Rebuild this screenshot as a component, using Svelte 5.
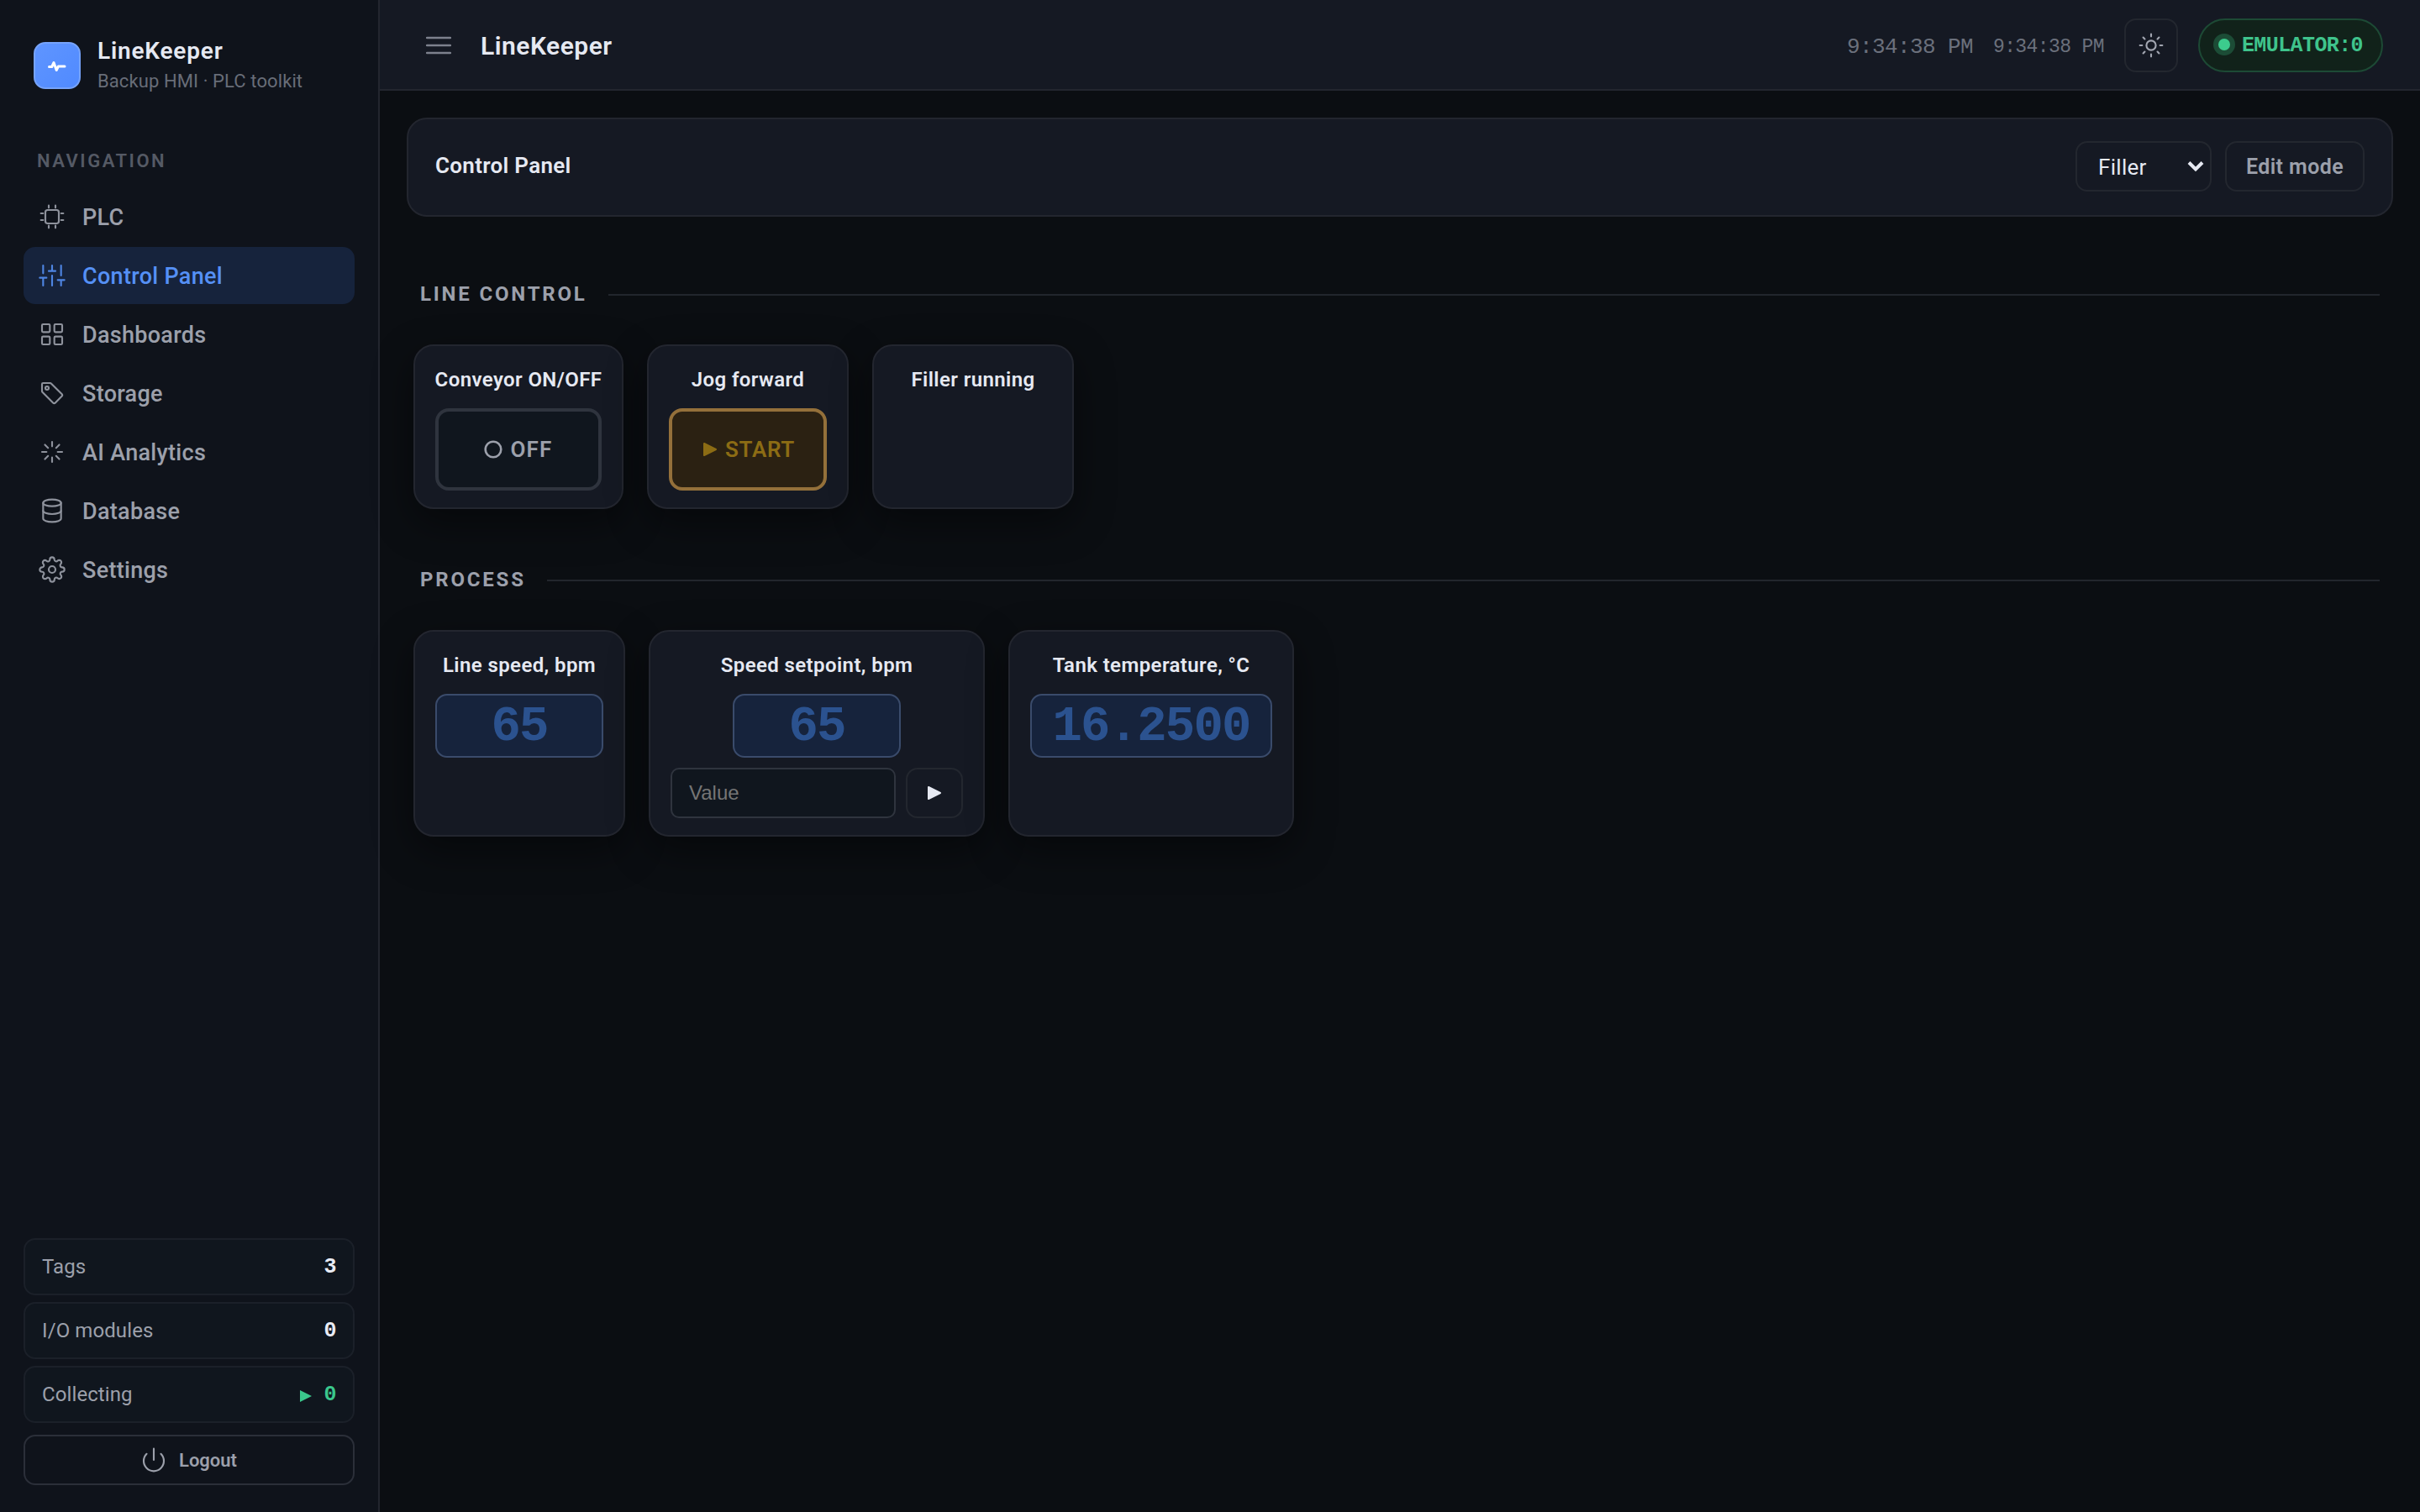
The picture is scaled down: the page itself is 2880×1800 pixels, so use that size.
<script lang="ts">
	const nav = [
		{
			label: "PLC",
			paths: [
				"M8 6h8a2 2 0 0 1 2 2v8a2 2 0 0 1-2 2H8a2 2 0 0 1-2-2V8a2 2 0 0 1 2-2z",
				"M9 2v2M15 2v2M9 20v2M15 20v2M20 9h2M20 15h2M2 9h2M2 15h2"
			]
		},
		{
			label: "Control Panel",
			paths: ["M4 21v-7M4 10V3M12 21v-9M12 8V3M20 21v-5M20 12V3M1 14h6M9 8h6M17 16h6"]
		},
		{
			label: "Dashboards",
			paths: [
				"M4 3h5a1 1 0 0 1 1 1v5a1 1 0 0 1-1 1H4a1 1 0 0 1-1-1V4a1 1 0 0 1 1-1z",
				"M15 3h5a1 1 0 0 1 1 1v5a1 1 0 0 1-1 1h-5a1 1 0 0 1-1-1V4a1 1 0 0 1 1-1z",
				"M4 14h5a1 1 0 0 1 1 1v5a1 1 0 0 1-1 1H4a1 1 0 0 1-1-1v-5a1 1 0 0 1 1-1z",
				"M15 14h5a1 1 0 0 1 1 1v5a1 1 0 0 1-1 1h-5a1 1 0 0 1-1-1v-5a1 1 0 0 1 1-1z"
			]
		},
		{
			label: "Storage",
			paths: [
				"M3 10.2V4a1 1 0 0 1 1-1h6.2a1.6 1.6 0 0 1 1.1.5l9.3 9.3a1.5 1.5 0 0 1 0 2.1l-5.7 5.7a1.5 1.5 0 0 1-2.1 0L3.5 11.3a1.6 1.6 0 0 1-.5-1.1z",
				"M9 7.5a1.5 1.5 0 1 1-3 0 1.5 1.5 0 0 1 3 0z"
			]
		},
		{
			label: "AI Analytics",
			paths: [
				"M12 3v4M12 17v4M3 12h4M17 12h4M5.6 5.6l2.8 2.8M15.6 15.6l2.8 2.8M5.6 18.4l2.8-2.8M15.6 8.4l2.8-2.8"
			]
		},
		{
			label: "Database",
			paths: [
				"M20 5c0 1.66-3.58 3-8 3S4 6.66 4 5s3.58-3 8-3 8 1.34 8 3z",
				"M4 5v14c0 1.66 3.58 3 8 3s8-1.34 8-3V5",
				"M4 12c0 1.66 3.58 3 8 3s8-1.34 8-3"
			]
		},
		{
			label: "Settings",
			paths: [
				"M15 12a3 3 0 1 1-6 0 3 3 0 0 1 6 0z",
				"M19.4 15a1.65 1.65 0 0 0 .33 1.82l.06.06a2 2 0 0 1 0 2.83 2 2 0 0 1-2.83 0l-.06-.06a1.65 1.65 0 0 0-1.82-.33 1.65 1.65 0 0 0-1 1.51V21a2 2 0 0 1-2 2 2 2 0 0 1-2-2v-.09A1.65 1.65 0 0 0 9 19.4a1.65 1.65 0 0 0-1.82.33l-.06.06a2 2 0 0 1-2.83 0 2 2 0 0 1 0-2.83l.06-.06a1.65 1.65 0 0 0 .33-1.82 1.65 1.65 0 0 0-1.51-1H3a2 2 0 0 1-2-2 2 2 0 0 1 2-2h.09A1.65 1.65 0 0 0 4.6 9a1.65 1.65 0 0 0-.33-1.82l-.06-.06a2 2 0 0 1 0-2.83 2 2 0 0 1 2.83 0l.06.06a1.65 1.65 0 0 0 1.82.33H9a1.65 1.65 0 0 0 1-1.51V3a2 2 0 0 1 2-2 2 2 0 0 1 2 2v.09a1.65 1.65 0 0 0 1 1.51 1.65 1.65 0 0 0 1.82-.33l.06-.06a2 2 0 0 1 2.83 0 2 2 0 0 1 0 2.83l-.06.06a1.65 1.65 0 0 0-.33 1.82V9a1.65 1.65 0 0 0 1.51 1H21a2 2 0 0 1 2 2 2 2 0 0 1-2 2h-.09a1.65 1.65 0 0 0-1.51 1z"
			]
		}
	];

	const stats = [
		{ label: "Tags", value: "3" },
		{ label: "I/O modules", value: "0" },
		{ label: "Collecting", value: "0", running: true }
	];

	const sections = [
		{
			title: "Line control",
			tiles: [
				{ title: "Conveyor ON/OFF", kind: "toggle", width: 250 },
				{ title: "Jog forward", kind: "momentary", width: 240 },
				{ title: "Filler running", kind: "lamp", width: 240 }
			]
		},
		{
			title: "Process",
			tiles: [
				{ title: "Line speed, bpm", kind: "value", value: "65", width: 252 },
				{ title: "Speed setpoint, bpm", kind: "setpoint", value: "65", width: 400 },
				{ title: "Tank temperature, °C", kind: "value", value: "16.2500", width: 340 }
			]
		}
	];

	let active = $state("Control Panel");
	let time = $state("9:34:38 PM");
	let panel = $state("Filler");
	let setpoint = $state("");
</script>

<div class="app">
	<aside class="sidebar">
		<div class="brand">
			<div class="logo">
				<svg viewBox="0 0 24 14" width="24" height="14">
					<path d="M2.5 7.5h3.2L8 2.5l3.2 9L13.4 7h7.6" />
				</svg>
			</div>
			<div>
				<div class="brand-name">LineKeeper</div>
				<div class="brand-sub">Backup HMI · PLC toolkit</div>
			</div>
		</div>

		<div class="nav-label">NAVIGATION</div>
		<nav>
			{#each nav as item}
				<button
					class={["nav-item", active === item.label ? "active" : ""]}
					onclick={() => (active = item.label)}
				>
					<svg class="icon" viewBox="0 0 24 24">
						{#each item.paths as d}
							<path {d} />
						{/each}
					</svg>
					<span>{item.label}</span>
				</button>
			{/each}
		</nav>

		<div class="stats">
			{#each stats as stat}
				<div class="stat">
					<span>{stat.label}</span>
					<span class={["stat-value", stat.running ? "running" : ""]}>
						{#if stat.running}
							<svg viewBox="0 0 14 14" width="14" height="14"><path d="M0 0l14 7-14 7z" /></svg>
						{/if}
						{stat.value}
					</span>
				</div>
			{/each}
		</div>
		<button class="logout">
			<svg class="icon" viewBox="0 0 24 24">
				<path d="M18.36 6.64a9 9 0 1 1-12.73 0M12 2v10" />
			</svg>
			Logout
		</button>
	</aside>

	<div class="main">
		<header>
			<svg class="burger" viewBox="0 0 30 22" width="30" height="22">
				<path d="M1 2h28M1 11h28M1 20h28" />
			</svg>
			<h1>LineKeeper</h1>
			<span class="clock">{time}</span>
			<span class="clock small">{time}</span>
			<button class="theme" aria-label="Theme">
				<svg class="icon" viewBox="0 0 24 24">
					<circle cx="12" cy="12" r="4.2" />
					<path
						d="M12 2v2M12 20v2M2 12h2M20 12h2M4.93 4.93l1.41 1.41M17.66 17.66l1.41 1.41M4.93 19.07l1.41-1.41M17.66 6.34l1.41-1.41"
					/>
				</svg>
			</button>
			<div class="status"><i></i><span>EMULATOR:0</span></div>
		</header>

		<div class="content">
			<div class="toolbar">
				<h2>Control Panel</h2>
				<label class="select">
					<select bind:value={panel}>
						<option>Filler</option>
					</select>
					<svg viewBox="0 0 20 14" width="20" height="14"><path d="M2 2.5l8 8 8-8" /></svg>
				</label>
				<button class="edit">Edit mode</button>
			</div>

			{#each sections as section}
				<section>
					<h3><span>{section.title}</span></h3>
					<div class="tiles">
						{#each section.tiles as tile}
							<div class="tile" style:width="{tile.width}px">
								<h4>{tile.title}</h4>
								{#if tile.kind === "toggle"}
									<button class="action">
										<svg viewBox="0 0 22 22" width="22" height="22">
											<circle cx="11" cy="11" r="9.3" />
										</svg>
										OFF
									</button>
								{:else if tile.kind === "momentary"}
									<button class="action start">
										<svg viewBox="0 0 18 18" width="18" height="18">
											<path d="M2 2l14 7-14 7z" />
										</svg>
										START
									</button>
								{:else if tile.value}
									<div class="value">{tile.value}</div>
								{/if}
								{#if tile.kind === "setpoint"}
									<div class="write">
										<input placeholder="Value" bind:value={setpoint} />
										<button aria-label="Send">
											<svg viewBox="0 0 18 18" width="18" height="18">
												<path d="M2 2l14 7-14 7z" />
											</svg>
										</button>
									</div>
								{/if}
							</div>
						{/each}
					</div>
				</section>
			{/each}
		</div>
	</div>
</div>

<style>
	:global(body) {
		background: #0b0e12;
	}

	.app {
		display: flex;
		height: 1800px;
		overflow: hidden;
		font-family: Roboto, sans-serif;
		color: #e6e9f2;
	}

	button,
	input,
	select {
		font: inherit;
		color: inherit;
		background: none;
		border: none;
		margin: 0;
		padding: 0;
		box-sizing: border-box;
	}

	h1,
	h2,
	h3,
	h4 {
		margin: 0;
		font-weight: 600;
	}

	svg {
		flex: none;
		fill: none;
		stroke: currentColor;
		stroke-linecap: round;
		stroke-linejoin: round;
	}
	.icon {
		width: 32px;
		height: 32px;
		stroke-width: 1.6;
	}

	/* Sidebar */
	.sidebar {
		display: flex;
		flex-direction: column;
		box-sizing: border-box;
		flex: none;
		width: 452px;
		padding: 41px 28px 32px;
		background: #0f131b;
		border-right: 2px solid #23262f;
	}
	.brand {
		display: flex;
		gap: 20px;
		padding-left: 12px;
		margin-bottom: 63px;
	}
	.logo {
		display: flex;
		align-items: center;
		justify-content: center;
		box-sizing: border-box;
		width: 56px;
		height: 56px;
		margin-top: 9px;
		border: 2px solid #76a3fa;
		border-radius: 14px;
		background: linear-gradient(135deg, #5f95ff, #508aff);
		color: #fff;
		stroke-width: 3;
	}
	.logo svg {
		margin-top: 2px;
	}
	.brand-name {
		font-size: 28px;
		font-weight: 600;
		line-height: 40px;
		letter-spacing: 0.8px;
	}
	.brand-sub {
		font-size: 22px;
		line-height: 32px;
		letter-spacing: 0.1px;
		color: #686d78;
	}
	.nav-label {
		padding-left: 16px;
		margin-bottom: 16px;
		font-size: 22px;
		font-weight: 600;
		line-height: 32px;
		letter-spacing: 2.5px;
		color: #555a65;
	}
	nav {
		display: flex;
		flex-direction: column;
		gap: 2px;
	}
	.nav-item {
		display: flex;
		align-items: center;
		gap: 20px;
		height: 68px;
		padding-left: 18px;
		border-radius: 14px;
		font-size: 27px;
		font-weight: 500;
		letter-spacing: 0.3px;
		color: #9ca0ab;
	}
	.nav-item span {
		padding-top: 2px;
	}
	.nav-item .icon {
		opacity: 0.9;
	}
	.nav-item.active {
		background: #16233c;
		color: #5590f5;
	}
	.stats {
		display: flex;
		flex-direction: column;
		gap: 8px;
		margin: auto 0 14px;
	}
	.stat {
		display: flex;
		align-items: center;
		justify-content: space-between;
		box-sizing: border-box;
		height: 68px;
		padding: 0 20px;
		border: 2px solid #1b2029;
		border-radius: 14px;
		background: #10161e;
		font-size: 24px;
		letter-spacing: 0.1px;
		color: #9ca0ab;
	}
	.stat-value {
		display: flex;
		align-items: center;
		gap: 15px;
		font-family: "Liberation Mono", monospace;
		font-size: 25px;
		font-weight: 700;
		letter-spacing: -0.6px;
		color: #e9ecf5;
	}
	.stat-value svg {
		fill: currentColor;
		stroke: none;
		margin-top: 3px;
	}
	.stat-value.running {
		color: #3ac78c;
	}
	.logout {
		display: flex;
		align-items: center;
		justify-content: center;
		gap: 14px;
		height: 60px;
		padding-right: 1px;
		border: 2px solid #2b2f39;
		border-radius: 14px;
		font-size: 22px;
		font-weight: 600;
		color: #9ca0ab;
	}

	/* Top bar */
	.main {
		flex: 1;
		min-width: 0;
	}
	header {
		display: flex;
		align-items: center;
		box-sizing: border-box;
		height: 108px;
		padding: 2px 44px 0 55px;
		background: #151923;
		border-bottom: 2px solid #23262f;
	}
	.burger {
		stroke-width: 2.4;
		color: #7d818d;
	}
	h1 {
		margin: 0 auto 0 35px;
		font-size: 30px;
		letter-spacing: 0.5px;
	}
	.clock {
		padding-top: 3px;
		margin-right: 24px;
		font-family: "Liberation Mono", monospace;
		font-size: 26px;
		letter-spacing: -0.6px;
		color: #6b707c;
	}
	.clock.small {
		font-size: 23px;
	}
	.theme {
		display: flex;
		align-items: center;
		justify-content: center;
		width: 64px;
		height: 64px;
		margin-right: 24px;
		border: 2px solid #23272f;
		border-radius: 14px;
		color: #a2a6b1;
	}
	.status {
		display: flex;
		align-items: center;
		gap: 14px;
		box-sizing: border-box;
		height: 64px;
		padding: 0 22px;
		border: 2px solid #1d4a35;
		border-radius: 32px;
		background: #11221a;
		font-family: "Liberation Mono", monospace;
		font-size: 25px;
		font-weight: 700;
		letter-spacing: -0.6px;
		color: #3fc48c;
	}
	.status span {
		padding-top: 1px;
	}
	.status i {
		width: 14px;
		height: 14px;
		margin-bottom: 2px;
		border-radius: 50%;
		background: #3ccb8d;
		box-shadow: 0 0 0 6px #1c4c36;
	}

	.content {
		padding: 32px;
	}
	.toolbar {
		display: flex;
		align-items: center;
		gap: 16px;
		box-sizing: border-box;
		height: 118px;
		padding: 0 32px 2px;
		margin-bottom: 75px;
		border: 2px solid #23262f;
		border-radius: 24px;
		background: #151923;
	}
	h2 {
		padding-bottom: 2px;
		margin-right: auto;
		font-size: 26px;
		letter-spacing: 0.3px;
	}
	.select,
	.edit {
		display: flex;
		align-items: center;
		box-sizing: border-box;
		height: 60px;
		border: 2px solid #23272f;
		border-radius: 14px;
		font-size: 26px;
	}
	.select {
		width: 162px;
		padding: 0 7px 0 25px;
	}
	.select select {
		flex: 1;
		min-width: 0;
		padding-top: 1px;
		letter-spacing: 0.3px;
		appearance: none;
		outline: none;
	}
	.select svg {
		stroke-width: 4;
		stroke-linecap: butt;
		stroke-linejoin: miter;
	}
	.edit {
		justify-content: center;
		width: 166px;
		padding-top: 1px;
		font-size: 25px;
		font-weight: 600;
		letter-spacing: 0.4px;
		color: #9ca0ab;
	}

	/* Sections */
	section {
		padding: 0 8px;
		margin-bottom: 67px;
	}
	h3 {
		display: flex;
		align-items: center;
		gap: 25px;
		height: 36px;
		padding: 0 8px;
		margin-bottom: 41px;
		font-size: 24px;
		font-weight: 700;
		letter-spacing: 2.8px;
		text-transform: uppercase;
		color: #9ca0ab;
	}
	h3 span {
		padding-bottom: 2px;
	}
	h3::after {
		content: "";
		flex: 1;
		height: 2px;
		background: #22262d;
	}
	.tiles {
		display: flex;
		gap: 28px;
	}
	.tile {
		display: flex;
		flex-direction: column;
		align-items: center;
		box-sizing: border-box;
		padding: 20px 24px;
		border: 2px solid #23262f;
		border-radius: 24px;
		background: #151923;
		box-shadow: 0 16px 48px rgba(0, 0, 0, 0.45);
	}
	h4 {
		margin-bottom: 14px;
		font-size: 24px;
		line-height: 40px;
		letter-spacing: 0.4px;
		white-space: nowrap;
	}
	.action {
		display: flex;
		align-items: center;
		justify-content: center;
		gap: 9px;
		align-self: stretch;
		height: 98px;
		border: 4px solid #2f343e;
		border-radius: 16px;
		background: #10161e;
		font-size: 26px;
		font-weight: 600;
		letter-spacing: 1.2px;
		color: #9ca0ab;
	}
	.action svg {
		stroke-width: 2.6;
	}
	.action.start {
		padding-left: 2px;
		border-color: #94703a;
		background: #2b2112;
		letter-spacing: 0.7px;
		color: #8c6c14;
	}
	.start svg,
	.write svg {
		fill: currentColor;
		stroke-width: 2;
	}
	.value {
		box-sizing: border-box;
		min-width: 200px;
		height: 76px;
		padding: 0 24px;
		border: 2px solid #3a4b6b;
		border-radius: 14px;
		background: #16233c;
		font-family: "Liberation Mono", monospace;
		font-size: 59px;
		font-weight: 700;
		line-height: 76px;
		letter-spacing: -1.8px;
		text-align: center;
		color: #2b528f;
	}
	.write {
		display: flex;
		gap: 12px;
		align-self: stretch;
		margin-top: 12px;
	}
	.write input {
		flex: 1;
		min-width: 0;
		height: 60px;
		padding: 0 20px;
		border: 2px solid #2f343e;
		border-radius: 10px;
		background: #10161e;
		font-family: "Liberation Sans", sans-serif;
		font-size: 24px;
	}
	.write input::placeholder {
		color: #757575;
	}
	.write button {
		display: flex;
		align-items: center;
		justify-content: center;
		width: 68px;
		border: 2px solid #23272f;
		border-radius: 14px;
	}
</style>
